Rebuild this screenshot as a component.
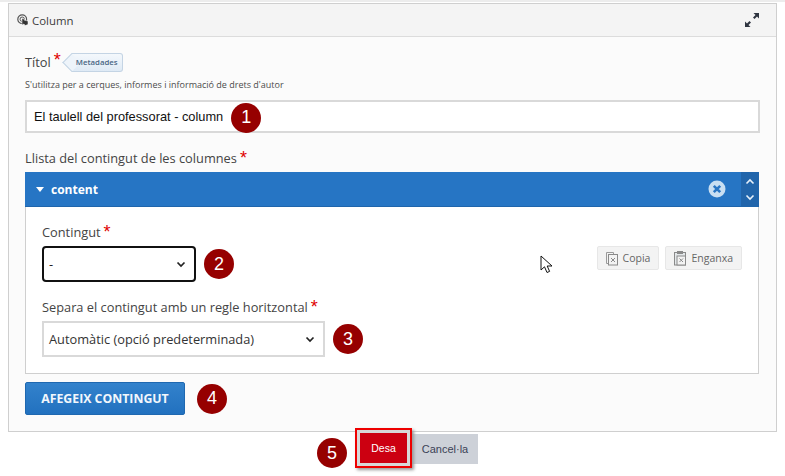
<script>
  const selectOne = ['-'];
  const selectTwo = ['Automàtic (opció predeterminada)'];
</script>

<div class="page">
  <div class="topline"></div>
  <section class="panel">
    <header class="head">
      <svg class="lib-icon" viewBox="0 0 12 12" width="12" height="12" aria-hidden="true">
        <circle cx="5.2" cy="5.2" r="4.4" fill="none" stroke="#555" stroke-width="1.2" />
        <circle cx="5.2" cy="5.2" r="2.2" fill="none" stroke="#555" stroke-width="1" />
        <path d="M5 4.5 L5 11 L7 10 L8 11.6 L11 10.5 L11 7 L7 6 L7 4.5Z" fill="#333" stroke="#fff" stroke-width=".5" />
      </svg>
      <span class="head-title">Column</span>
      <svg class="expand" viewBox="0 0 16 16" width="16" height="16" aria-hidden="true">
        <path d="M9.5 1 H15 V6.5 L13 4.5 L10.5 7 L9 5.5 L11.5 3Z" fill="#2f3540" />
        <path d="M6.5 15 H1 V9.5 L3 11.5 L5.5 9 L7 10.5 L4.5 13Z" fill="#2f3540" />
      </svg>
    </header>

    <div class="body">
      <div class="title-row">
        <span class="label">Títol</span><span class="star">*</span>
        <span class="tag">Metadades</span>
      </div>
      <p class="hint">S'utilitza per a cerques, informes i informació de drets d'autor</p>
      <div class="text-input">
        <span class="value">El taulell del professorat - column</span>
        <span class="badge low">1</span>
      </div>

      <div class="list-label"><span class="label">Llista del contingut de les columnes</span><span class="star">*</span></div>

      <div class="group-head">
        <span class="caret"></span>
        <span class="group-title">content</span>
        <span class="remove">
          <svg viewBox="0 0 18 18" width="18" height="18" aria-hidden="true">
            <circle cx="9" cy="9" r="8.5" fill="#c9dff2" />
            <path d="M5.8 5.8 L12.2 12.2 M12.2 5.8 L5.8 12.2" stroke="#2a76c4" stroke-width="2.6" />
          </svg>
        </span>
        <span class="handle">
          <svg viewBox="0 0 10 7" width="10" height="7" aria-hidden="true"><path d="M1.5 5.5 L5 2 L8.5 5.5" fill="none" stroke="#e6f0fa" stroke-width="1.6" /></svg>
          <svg viewBox="0 0 10 7" width="10" height="7" aria-hidden="true"><path d="M1.5 1.5 L5 5 L8.5 1.5" fill="none" stroke="#e6f0fa" stroke-width="1.6" /></svg>
        </span>
      </div>

      <div class="group-body">
        <div class="first-field">
          <div>
            <div class="field-label"><span class="label">Contingut</span><span class="star">*</span></div>
            <div class="select-row">
              <div class="select focus">
                <span class="dash">{selectOne[0]}</span>
                <svg class="chev" viewBox="0 0 10 7" width="10" height="7" aria-hidden="true"><path d="M1.5 1.5 L5 5 L8.5 1.5" fill="none" stroke="#222" stroke-width="1.7" /></svg>
              </div>
              <span class="badge">2</span>
            </div>
          </div>
          <div class="clip-buttons">
            <span class="clip first">
              <svg viewBox="0 0 14 16" width="14" height="16" aria-hidden="true">
                <path d="M3 13.5 H1.5 V2.5 H8.5 V4" fill="none" stroke="#9a9a9a" />
                <rect x="3.5" y="4.5" width="9" height="10.5" fill="#f3f3f3" stroke="#8a8a8a" />
                <path d="M6 8 L10 12 M10 8 L6 12" stroke="#8a8a8a" />
              </svg>
              Copia
            </span>
            <span class="clip">
              <svg viewBox="0 0 14 16" width="14" height="16" aria-hidden="true">
                <rect x="1.5" y="2.5" width="11" height="12.5" fill="#e4e8ea" stroke="#8a8a8a" />
                <rect x="4" y="1" width="6" height="3" fill="#8a8a8a" />
                <rect x="4" y="6" width="8.5" height="9" fill="#f3f3f3" stroke="#8a8a8a" />
                <path d="M6.5 8.5 L10 12 M10 8.5 L6.5 12" stroke="#8a8a8a" />
              </svg>
              Enganxa
            </span>
          </div>
        </div>

        <div class="field-label second"><span class="label">Separa el contingut amb un regle horitzontal</span><span class="star">*</span></div>
        <div class="select-row">
          <div class="select wide">
            <span class="select-value">{selectTwo[0]}</span>
            <svg class="chev" viewBox="0 0 10 7" width="10" height="7" aria-hidden="true"><path d="M1.5 1.5 L5 5 L8.5 1.5" fill="none" stroke="#222" stroke-width="1.7" /></svg>
          </div>
          <span class="badge">3</span>
        </div>
      </div>

      <div class="add-row">
        <span class="add-btn">AFEGEIX CONTINGUT</span>
        <span class="badge">4</span>
      </div>
    </div>
  </section>

  <footer class="actions">
    <span class="badge low-five">5</span>
    <span class="save-ring"><span class="save">Desa</span></span>
    <span class="cancel">Cancel·la</span>
  </footer>

  <svg class="cursor" viewBox="0 0 14 20" width="14" height="20" aria-hidden="true">
    <path d="M1 1 V15 L4.5 11.8 L7 17.5 L9.6 16.4 L7.2 11 H12Z" fill="#fff" stroke="#111" stroke-width="1" />
  </svg>
</div>

<style>
  :global(body) {
    margin: 0;
    background: #fff;
  }

  .page {
    position: relative;
    width: 785px;
    height: 476px;
    overflow: hidden;
    font-family: "Open Sans", sans-serif;
    color: #3d3d3d;
  }

  .topline {
    height: 2px;
    background: #ececec;
  }

  .panel {
    margin: 1px 8px 0 8px;
    border: 1px solid #cfcfcf;
    background: #fbfbfb;
    height: 429px;
    box-sizing: border-box;
    width: 769px;
  }

  .head {
    display: flex;
    align-items: center;
    height: 33px;
    box-sizing: border-box;
    padding: 0 16px 0 8px;
    background: #f4f4f4;
    border-bottom: 1px solid #dcdcdc;
  }

  .lib-icon {
    flex: none;
  }

  .head-title {
    margin-left: 3px;
    font-size: 11.4px;
    color: #3c3c3c;
  }

  .expand {
    margin-left: auto;
  }

  .body {
    padding: 14px 16px 0 16px;
  }

  .title-row {
    display: flex;
    align-items: center;
    height: 22px;
  }

  .label {
    font-size: 12.8px;
    color: #444;
    line-height: 18px;
  }

  .star {
    color: #e00000;
    font-family: "Liberation Sans", sans-serif;
    font-size: 18px;
    line-height: 12px;
    margin-left: 3px;
    align-self: flex-start;
    padding-top: 3px;
  }

  .tag {
    position: relative;
    isolation: isolate;
    margin-left: 10px;
    height: 19px;
    display: inline-flex;
    align-items: center;
    padding: 0 4px 0 5px;
    font-size: 7.8px;
    font-weight: 600;
    color: #4a6785;
    background: linear-gradient(#f4f8fc, #dfeaf5);
    border: 1px solid #c4d4e4;
    border-left: none;
    border-radius: 0 3px 3px 0;
    box-sizing: border-box;
  }

  .tag::before {
    content: "";
    position: absolute;
    z-index: -1;
    left: -6px;
    top: 2px;
    width: 12px;
    height: 12px;
    background: #eef4fa;
    border-left: 1px solid #c4d4e4;
    border-bottom: 1px solid #c4d4e4;
    transform: rotate(45deg);
  }

  .hint {
    margin: 5px 0 0 0;
    font-size: 9px;
    line-height: 14px;
    color: #4b4b4b;
  }

  .text-input {
    display: flex;
    align-items: center;
    margin-top: 8px;
    height: 33px;
    box-sizing: border-box;
    border: 2px solid #d9d9d9;
    background: #fff;
    padding-left: 7px;
    gap: 8px;
  }

  .value {
    font-family: "Liberation Sans", sans-serif;
    font-size: 12.8px;
    color: #111;
  }

  .badge {
    flex: none;
    display: flex;
    align-items: center;
    justify-content: center;
    width: 30px;
    height: 30px;
    border-radius: 50%;
    background: #960000;
    color: #fff;
    font-family: "Liberation Sans", sans-serif;
    font-size: 18px;
  }

  .badge.low {
    margin-top: 2px;
  }

  .badge.low-five {
    margin-top: 10px;
  }

  .list-label {
    display: flex;
    margin-top: 16px;
    height: 23px;
  }

  .group-head {
    display: flex;
    align-items: center;
    height: 35px;
    width: 734px;
    background: #2675c4;
    border-bottom: 1px solid #1f65ab;
    box-sizing: border-box;
    padding-left: 11px;
    color: #fff;
  }

  .caret {
    width: 0;
    height: 0;
    border-left: 4.5px solid transparent;
    border-right: 4.5px solid transparent;
    border-top: 5px solid #fff;
    margin-right: 7px;
  }

  .group-title {
    font-weight: 700;
    font-size: 12px;
  }

  .remove {
    margin-left: auto;
    display: flex;
    margin-right: 15px;
  }

  .handle {
    width: 18px;
    align-self: stretch;
    background: #2165ab;
    display: flex;
    flex-direction: column;
    align-items: center;
    justify-content: center;
    gap: 9px;
  }

  .group-body {
    width: 734px;
    height: 167px;
    box-sizing: border-box;
    border: 1px solid #cfcfcf;
    border-top: none;
    background: #fff;
    padding: 16px 16px 0 16px;
  }

  .first-field {
    display: flex;
    justify-content: space-between;
  }

  .field-label {
    display: flex;
    height: 23px;
  }

  .field-label.second {
    margin-top: 16px;
  }

  .select-row {
    display: flex;
    align-items: center;
    gap: 8px;
  }

  .select {
    display: flex;
    align-items: center;
    justify-content: space-between;
    box-sizing: border-box;
    height: 36px;
    width: 283px;
    border: 2px solid #d9d9d9;
    background: #fff;
    padding: 0 8px 0 5px;
  }

  .select.focus {
    width: 154px;
    border-color: #111;
    border-radius: 4px;
  }

  .dash {
    font-size: 12.8px;
    color: #222;
  }

  .select-value {
    font-size: 12.8px;
    color: #333;
  }

  .clip-buttons {
    display: flex;
    gap: 6px;
    align-self: flex-end;
    margin-bottom: 12px;
  }

  .clip {
    display: flex;
    align-items: center;
    gap: 4px;
    height: 24px;
    box-sizing: border-box;
    padding: 0 8px 0 7px;
    background: #f3f3f3;
    border: 1px solid #e7e7e7;
    border-radius: 2px;
    font-size: 10.5px;
    color: #666;
  }

  .add-row {
    display: flex;
    align-items: center;
    gap: 12px;
    margin-top: 8px;
  }

  .add-btn {
    display: flex;
    align-items: center;
    justify-content: center;
    width: 160px;
    height: 33px;
    box-sizing: border-box;
    border-radius: 2px;
    background: linear-gradient(#3382cc, #2271bf);
    border: 1px solid #1f68b0;
    color: #f2f7fc;
    font-weight: 700;
    font-size: 12.3px;
  }

  .actions {
    display: flex;
    align-items: center;
    margin-left: 317px;
    margin-top: -4px;
    height: 40px;
  }

  .save-ring {
    position: relative;
    margin-left: 8px;
    display: flex;
    padding: 3px;
    background: #d8d8d8;
    border: 2px solid #ee0000;
    box-shadow: 2px 2px 3px #999;
  }

  .save {
    display: flex;
    align-items: center;
    justify-content: center;
    width: 47px;
    height: 30px;
    background: #cc0011;
    color: #fff;
    font-family: "Liberation Sans", sans-serif;
    font-size: 10.5px;
  }

  .cancel {
    display: flex;
    align-items: center;
    justify-content: center;
    width: 66px;
    height: 30px;
    margin-top: 1px;
    background: #cdd1d8;
    color: #3b4256;
    font-family: "Liberation Sans", sans-serif;
    font-size: 11px;
  }

  .cursor {
    position: absolute;
    left: 540px;
    top: 255px;
  }
</style>
